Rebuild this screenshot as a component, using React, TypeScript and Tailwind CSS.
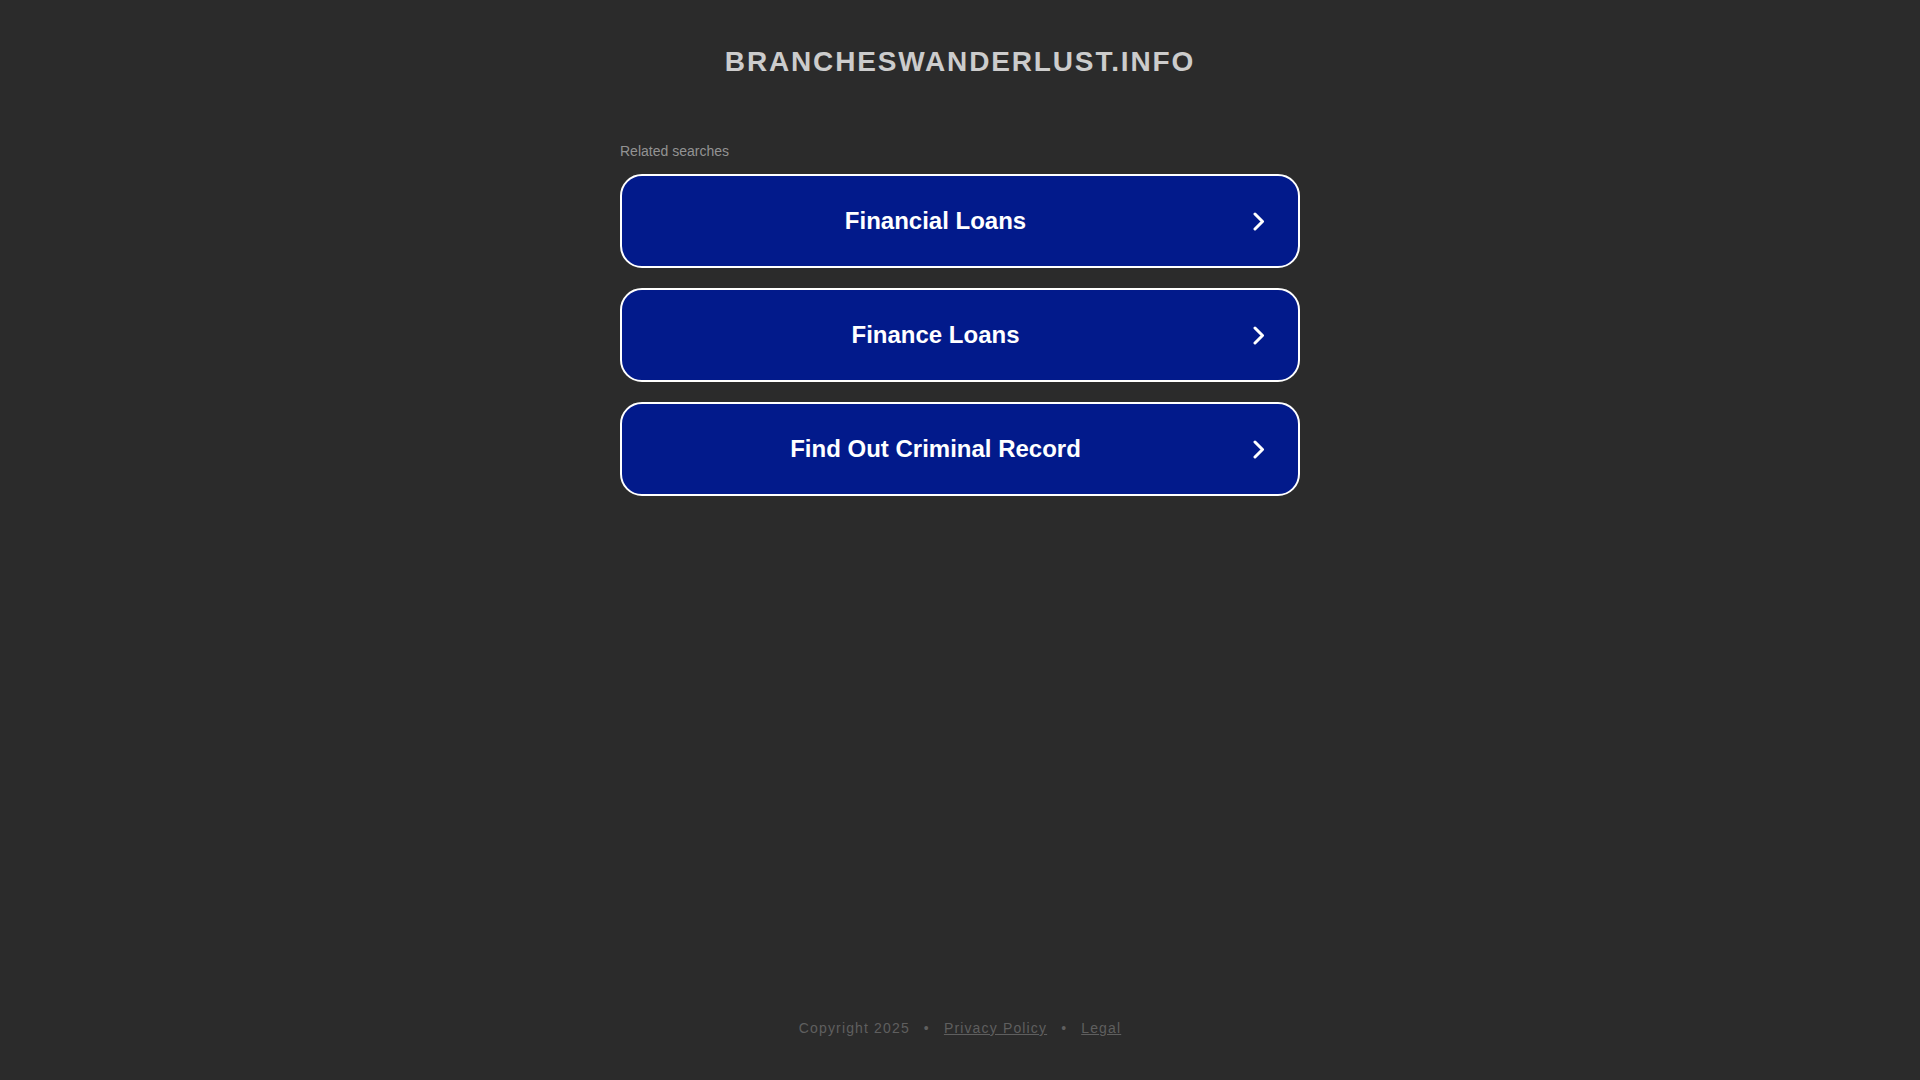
export default function App() {
  const items = ["Financial Loans", "Finance Loans", "Find Out Criminal Record"];

  return (
    <div
      className="min-h-screen h-[1080px] bg-[#2b2b2b] flex flex-col items-center"
      style={{ fontFamily: '"Liberation Sans", Arial, sans-serif' }}
    >
      <h1 className="pt-[45px] text-[28px] leading-[34px] font-bold tracking-[1.85px] text-[#cccccc]">
        BRANCHESWANDERLUST.INFO
      </h1>

      <div className="w-[680px] mt-[64px]">
        <p className="text-[14px] leading-[16px] text-[#939393]">Related searches</p>

        <div className="mt-[15px] flex flex-col gap-[20px]">
          {items.map((label) => (
            <a
              key={label}
              href="#"
              className="h-[94px] flex items-center rounded-[22px] border-2 border-white bg-[#021a8b] text-white"
            >
              <span className="flex-1 text-center text-[24px] font-bold">{label}</span>
              <svg
                width="12"
                height="19"
                viewBox="0 0 12 19"
                className="ml-[4px] mr-[33px]"
                fill="none"
                stroke="white"
                strokeWidth="3"
                strokeLinecap="round"
                strokeLinejoin="round"
              >
                <path d="M2 2 L9.5 9.5 L2 17" />
              </svg>
            </a>
          ))}
        </div>
      </div>

      <div className="mt-auto mb-[44px] text-[14px] leading-[16px] tracking-[1.15px] text-[#5f5f5f]">
        <span>Copyright 2025</span>
        <span className="mx-[14px]">•</span>
        <a href="#" className="underline">Privacy Policy</a>
        <span className="mx-[14px]">•</span>
        <a href="#" className="underline">Legal</a>
      </div>
    </div>
  );
}
